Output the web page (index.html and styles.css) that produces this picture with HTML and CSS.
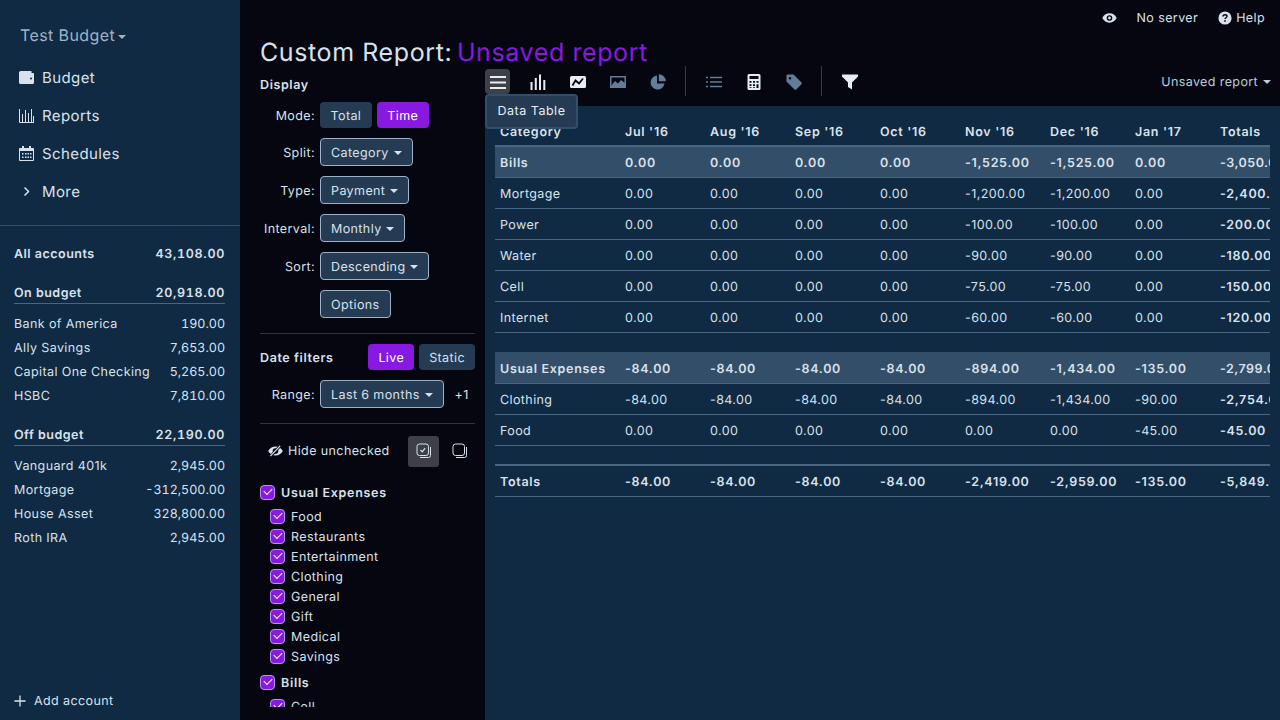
FILE: index.html
```html
<!DOCTYPE html>
<html lang="en">
<head>
    <meta charset="UTF-8">
    <title>Custom Report</title>
    <link rel="stylesheet" href="styles.css">
</head>
<body>
    <div class="app">
        <aside class="sidebar">
            <div class="budget-name">Test Budget <span class="caret"></span></div>
            <nav class="nav">
                <a class="nav-item">
                    <svg class="nav-icon" viewBox="0 0 15 15"><path d="M2.500 1h10v2H14c.5 0 1 .4 1 1v8.500c0 .8-.6 1.500-1.500 1.500h-12C.7 14 0 13.300 0 12.500v-10C0 1.700 1 1 2.500 1zM12 7.500a1 1 0 1 0 0 2 1 1 0 0 0 0-2z" fill="currentColor" fill-rule="evenodd"/></svg>
                    Budget
                </a>
                <a class="nav-item">
                    <svg class="nav-icon" viewBox="0 0 15 15"><path d="M.5 1v13.500H15M3.500 6v8M6.500 2v12M9.500 5v9M12.500 1v13M14.500 8v6" fill="none" stroke="currentColor"/></svg>
                    Reports
                </a>
                <a class="nav-item">
                    <svg class="nav-icon" viewBox="0 0 15 15"><path d="M.5 2.500h14v12H.5z" fill="none" stroke="currentColor"/><path d="M.5 2.500h14V5H.5zM3 0h2v3.500H3zM10 0h2v3.500h-2z" fill="currentColor"/><path d="M3 7h1.500v1.500H3zM6 7h1.500v1.500H6zM8.500 7H10v1.500H8.500zM11 7h1.500v1.500H11zM3 10.500h1.500V12H3zM6 10.500h1.500V12H6zM8.500 10.500H10V12H8.500zM11 10.500h1.500V12H11z" fill="currentColor"/></svg>
                    Schedules
                </a>
                <a class="nav-item">
                    <svg class="nav-icon" viewBox="0 0 15 15"><path d="M5.500 3.500 9.500 7.500 5.500 11.500" fill="none" stroke="currentColor" stroke-width="1.500"/></svg>
                    More
                </a>
            </nav>
            <div class="accounts">
                <div class="acct-total"><span>All accounts</span><span class="amt">43,108.00</span></div>
                <div class="acct-head"><span>On budget</span><span class="amt">20,918.00</span></div>
                <div class="acct"><span>Bank of America</span><span class="amt">190.00</span></div>
                <div class="acct"><span>Ally Savings</span><span class="amt">7,653.00</span></div>
                <div class="acct"><span>Capital One Checking</span><span class="amt">5,265.00</span></div>
                <div class="acct"><span>HSBC</span><span class="amt">7,810.00</span></div>
                <div class="acct-head"><span>Off budget</span><span class="amt">22,190.00</span></div>
                <div class="acct"><span>Vanguard 401k</span><span class="amt">2,945.00</span></div>
                <div class="acct"><span>Mortgage</span><span class="amt">-312,500.00</span></div>
                <div class="acct"><span>House Asset</span><span class="amt">328,800.00</span></div>
                <div class="acct"><span>Roth IRA</span><span class="amt">2,945.00</span></div>
            </div>
            <div class="add-account">
                <svg class="add-icon" viewBox="0 0 14 14"><path d="M7 .5v13M.5 7h13" fill="none" stroke="currentColor" stroke-width="1.500"/></svg>
                Add account
            </div>
        </aside>

        <main class="main">
            <div class="titlebar">
                <svg class="top-icon eye" viewBox="0 0 16 12"><path d="M8 1C4.500 1 1.600 3.200.4 6c1.200 2.800 4.100 5 7.600 5s6.400-2.200 7.600-5C14.400 3.200 11.500 1 8 1zm0 8a3 3 0 1 1 0-6 3 3 0 0 1 0 6zm0-1.500a1.500 1.500 0 1 0 0-3 1.500 1.500 0 0 0 0 3z" fill="currentColor" fill-rule="evenodd"/></svg>
                <span class="no-server">No server</span>
                <span class="help">
                    <svg class="top-icon" viewBox="0 0 16 16"><circle cx="8" cy="8" r="7.500" fill="currentColor"/><path d="M5.700 6.300c0-1.300 1-2.100 2.300-2.100s2.300.8 2.300 1.900c0 1.600-2.300 1.600-2.300 3.100" fill="none" stroke="#05060f" stroke-width="1.600"/><rect x="7.100" y="10.500" width="1.800" height="1.800" fill="#05060f"/></svg>
                    Help
                </span>
            </div>
            <h1 class="report-title">Custom Report: <span class="accent">Unsaved report</span></h1>

            <div class="report">
                <section class="panel">
                    <div class="panel-head">Display</div>
                    <div class="field field-first"><label>Mode:</label><span class="btn">Total</span><span class="btn btn-on">Time</span></div>
                    <div class="field"><label>Split:</label><span class="btn btn-sel">Category <span class="caret"></span></span></div>
                    <div class="field"><label>Type:</label><span class="btn btn-sel">Payment <span class="caret"></span></span></div>
                    <div class="field"><label>Interval:</label><span class="btn btn-sel">Monthly <span class="caret"></span></span></div>
                    <div class="field"><label>Sort:</label><span class="btn btn-sel">Descending <span class="caret"></span></span></div>
                    <div class="field"><label></label><span class="btn btn-sel">Options</span></div>
                    <hr class="rule">
                    <div class="date-head"><span class="panel-head">Date filters</span><span class="date-btns"><span class="btn btn-on">Live</span><span class="btn">Static</span></span></div>
                    <div class="field"><label>Range:</label><span class="btn btn-sel">Last 6 months <span class="caret"></span></span><span class="plus-one">+1</span></div>
                    <hr class="rule">
                    <div class="hide-row">
                        <svg class="hide-icon" viewBox="0 0 16 12"><path d="M8 1.200C4.500 1.200 1.600 3.300.2 6c1.400 2.700 4.300 4.800 7.800 4.800s6.400-2.100 7.800-4.800C14.400 3.300 11.500 1.200 8 1.200zm0 1.800a3 3 0 0 1 3 3 3 3 0 0 1-3 3 3 3 0 0 1-3-3 3 3 0 0 1 3-3z" fill="currentColor" fill-rule="evenodd"/><path d="M2.500 12 13.500 0" stroke="#05060f" stroke-width="3"/><path d="M2.500 11.500 13 .5" stroke="currentColor" stroke-width="1.300"/></svg>
                        <span class="hide-label">Hide unchecked</span>
                        <span class="sq-btn sq-on">
                            <svg viewBox="0 0 16 16"><rect x="1" y="1" width="11.500" height="11.500" rx="2.500" fill="none" stroke="currentColor"/><path d="M14.500 4v8.500a2 2 0 0 1-2 2H4" fill="none" stroke="currentColor"/><path d="m4.500 7 1.800 1.800 2.800-3.600" fill="none" stroke="currentColor" stroke-width="1.200"/></svg>
                        </span>
                        <span class="sq-btn">
                            <svg viewBox="0 0 16 16"><rect x="1" y="1" width="11.500" height="11.500" rx="2.500" fill="none" stroke="currentColor"/><path d="M14.500 4v8.500a2 2 0 0 1-2 2H4" fill="none" stroke="currentColor"/></svg>
                        </span>
                    </div>
                    <div class="cats">
                        <div class="cat-group"><span class="check"></span>Usual Expenses</div>
                        <div class="cat"><span class="check"></span>Food</div>
                        <div class="cat"><span class="check"></span>Restaurants</div>
                        <div class="cat"><span class="check"></span>Entertainment</div>
                        <div class="cat"><span class="check"></span>Clothing</div>
                        <div class="cat"><span class="check"></span>General</div>
                        <div class="cat"><span class="check"></span>Gift</div>
                        <div class="cat"><span class="check"></span>Medical</div>
                        <div class="cat"><span class="check"></span>Savings</div>
                        <div class="cat-group"><span class="check"></span>Bills</div>
                        <div class="cat"><span class="check"></span>Cell</div>
                    </div>
                </section>

                <section class="results">
                    <div class="toolbar">
                        <span class="tool tool-on">
                            <svg viewBox="0 0 16 16"><path d="M0 3h16M0 8.500h16M0 14h16" stroke="currentColor" stroke-width="2"/></svg>
                        </span>
                        <span class="tool">
                            <svg viewBox="0 0 16 16"><path d="M1.500 8v8M5.800 4v12M10 .5V16M14.300 6v10" stroke="currentColor" stroke-width="2"/></svg>
                        </span>
                        <span class="tool">
                            <svg viewBox="0 0 16 14"><rect y="1" width="16" height="12" rx="1.500" fill="currentColor"/><path d="M2.500 10.500 5.500 5.500 9 8.500 13 3.500" fill="none" stroke="#05060f" stroke-width="1.800"/></svg>
                        </span>
                        <span class="tool tool-dim">
                            <svg viewBox="0 0 16 14"><path d="M.8 1.800h14.400v10.400H.8z" fill="none" stroke="currentColor" stroke-width="1.500"/><path d="M1 11l4-5 3 2.500L11 5l4 3v4H1z" fill="currentColor"/></svg>
                        </span>
                        <span class="tool tool-dim">
                            <svg viewBox="0 0 16 16"><path d="M7 1.500a7 7 0 1 0 7.500 8H7z" fill="currentColor"/><path d="M8.800.3v7h7a7 7 0 0 0-7-7z" fill="currentColor"/></svg>
                        </span>
                        <span class="tool-sep"></span>
                        <span class="tool tool-dim">
                            <svg viewBox="0 0 16 12"><path d="M0 1.500h2M4 1.500h12M0 6h2M4 6h12M0 10.500h2M4 10.500h12" stroke="currentColor" stroke-width="1.500"/></svg>
                        </span>
                        <span class="tool">
                            <svg viewBox="0 0 14 16"><path d="M2 0h10a1.500 1.500 0 0 1 1.500 1.500v13A1.500 1.500 0 0 1 12 16H2a1.500 1.500 0 0 1-1.500-1.500v-13A1.500 1.500 0 0 1 2 0zm.5 2v3h9V2zm0 5v1.800h2V7zm3.500 0v1.800h2V7zm3.500 0v1.800h2V7zm-7 3.200V12h2v-1.800zm3.500 0V12h2v-1.800zm3.500 0V14h2v-3.800zm-7 3V14h2v-.8zm3.500 0V14h2v-.8z" fill="currentColor" fill-rule="evenodd"/></svg>
                        </span>
                        <span class="tool tool-dim">
                            <svg viewBox="0 0 16 16"><path d="M.5 1.500A1 1 0 0 1 1.500.5h6l8 8a1.200 1.200 0 0 1 0 1.700l-5.300 5.300a1.200 1.200 0 0 1-1.700 0l-8-8zM4 3a1.300 1.300 0 1 0 0 2.600A1.300 1.300 0 0 0 4 3z" fill="currentColor" fill-rule="evenodd"/></svg>
                        </span>
                        <span class="tool-sep"></span>
                        <span class="tool tool-filter">
                            <svg viewBox="0 0 16 16"><path d="M0 .5h16v2L10 8.500V15.500L6 13V8.500L0 2.500z" fill="currentColor"/></svg>
                        </span>
                        <span class="saved-menu">Unsaved report <span class="caret"></span></span>
                        <span class="tooltip">Data Table</span>
                    </div>
                    <div class="table-pane">
                        <div class="table-clip">
                        <table class="report-table">
                            <thead>
                                <tr><th>Category</th><th>Jul '16</th><th>Aug '16</th><th>Sep '16</th><th>Oct '16</th><th>Nov '16</th><th>Dec '16</th><th>Jan '17</th><th>Totals</th></tr>
                            </thead>
                            <tbody>
                                <tr class="group"><td>Bills</td><td>0.00</td><td>0.00</td><td>0.00</td><td>0.00</td><td>-1,525.00</td><td>-1,525.00</td><td>0.00</td><td>-3,050.00</td></tr>
                                <tr><td>Mortgage</td><td>0.00</td><td>0.00</td><td>0.00</td><td>0.00</td><td>-1,200.00</td><td>-1,200.00</td><td>0.00</td><td class="total">-2,400.00</td></tr>
                                <tr><td>Power</td><td>0.00</td><td>0.00</td><td>0.00</td><td>0.00</td><td>-100.00</td><td>-100.00</td><td>0.00</td><td class="total">-200.00</td></tr>
                                <tr><td>Water</td><td>0.00</td><td>0.00</td><td>0.00</td><td>0.00</td><td>-90.00</td><td>-90.00</td><td>0.00</td><td class="total">-180.00</td></tr>
                                <tr><td>Cell</td><td>0.00</td><td>0.00</td><td>0.00</td><td>0.00</td><td>-75.00</td><td>-75.00</td><td>0.00</td><td class="total">-150.00</td></tr>
                                <tr><td>Internet</td><td>0.00</td><td>0.00</td><td>0.00</td><td>0.00</td><td>-60.00</td><td>-60.00</td><td>0.00</td><td class="total">-120.00</td></tr>
                                <tr class="gap"><td colspan="9"></td></tr>
                                <tr class="group"><td>Usual Expenses</td><td>-84.00</td><td>-84.00</td><td>-84.00</td><td>-84.00</td><td>-894.00</td><td>-1,434.00</td><td>-135.00</td><td>-2,799.00</td></tr>
                                <tr><td>Clothing</td><td>-84.00</td><td>-84.00</td><td>-84.00</td><td>-84.00</td><td>-894.00</td><td>-1,434.00</td><td>-90.00</td><td class="total">-2,754.00</td></tr>
                                <tr><td>Food</td><td>0.00</td><td>0.00</td><td>0.00</td><td>0.00</td><td>0.00</td><td>0.00</td><td>-45.00</td><td class="total">-45.00</td></tr>
                                <tr class="gap"><td colspan="9"></td></tr>
                                <tr class="totals"><td>Totals</td><td>-84.00</td><td>-84.00</td><td>-84.00</td><td>-84.00</td><td>-2,419.00</td><td>-2,959.00</td><td>-135.00</td><td>-5,849.00</td></tr>
                            </tbody>
                        </table>
                        </div>
                    </div>
                </section>
            </div>
        </main>
    </div>
</body>
</html>
```

FILE: styles.css
```css
* {
    box-sizing: border-box;
}
html, body {
    margin: 0;
    height: 720px;
    overflow: hidden;
}
body {
    font-family: Inter, "Noto Sans", sans-serif;
    font-size: 12.5px;
    letter-spacing: 0.4px;
    text-rendering: geometricPrecision;
    color: #d9e2ec;
    background: #05060f;
}
.app {
    display: flex;
    height: 720px;
}
.caret {
    display: inline-block;
    width: 0;
    height: 0;
    margin-left: 1px;
    vertical-align: 2px;
    border-left: 4px solid transparent;
    border-right: 4px solid transparent;
    border-top: 4px solid currentColor;
}

/* sidebar */
.sidebar {
    width: 240px;
    flex: none;
    display: flex;
    flex-direction: column;
    background: #102a43;
}
.budget-name {
    padding: 25px 20px 0;
    height: 58px;
    font-size: 16px;
    line-height: 20px;
    color: #9fb3c8;
}
.budget-name .caret {
    margin-left: -2px;
}
.nav {
    padding-bottom: 15px;
    border-bottom: 1px solid #334e68;
}
.nav-item {
    display: flex;
    align-items: center;
    height: 38px;
    padding: 1px 0 0 19px;
    font-size: 15px;
    letter-spacing: 0.4px;
    color: #d9e2ec;
}
.nav-icon {
    width: 15px;
    height: 15px;
    margin: -1px 8px 0 0;
}
.accounts {
    flex: 1;
    padding: 15px 15px 0 14px;
}
.acct-total, .acct-head, .acct {
    display: flex;
    justify-content: space-between;
    height: 24px;
    line-height: 28px;
}
.amt {
    font-variant-numeric: tabular-nums;
    letter-spacing: 0;
}
.acct-total, .acct-head {
    font-weight: 600;
    letter-spacing: 0.5px;
}
.acct-total .amt, .acct-head .amt {
    letter-spacing: 0.7px;
}
.acct-head {
    margin-top: 15px;
    margin-bottom: 7px;
    border-bottom: 1px solid #486581;
}
.add-account {
    display: flex;
    align-items: center;
    height: 36px;
    margin-bottom: 1px;
    padding-left: 14px;
}
.add-icon {
    width: 12px;
    height: 12px;
    margin-right: 8px;
}

/* header */
.main {
    flex: 1;
    min-width: 0;
    display: flex;
    flex-direction: column;
}
.titlebar {
    display: flex;
    align-items: center;
    justify-content: flex-end;
    height: 36px;
    padding-right: 15px;
    flex: none;
}
.top-icon {
    width: 14px;
    height: 14px;
}
.eye {
    width: 15px;
    height: 12px;
}
.no-server {
    margin: 0 20px;
}
.help {
    display: flex;
    align-items: center;
    gap: 4px;
}
.report-title {
    margin: 0;
    padding: 1px 0 0 20px;
    height: 33px;
    flex: none;
    font-size: 25px;
    line-height: 32px;
    font-weight: 400;
    letter-spacing: 0.6px;
    color: #d9e2ec;
}
.accent {
    margin-left: -3px;
    color: #8719e0;
}
.report {
    flex: 1;
    display: flex;
    min-height: 0;
}

/* left panel */
.panel {
    width: 245px;
    flex: none;
    padding: 0 10px 0 20px;
    overflow: hidden;
}
.panel-head {
    padding-top: 4px;
    font-weight: 600;
    line-height: 26px;
    height: 28px;
    letter-spacing: 0.6px;
}
.field {
    display: flex;
    align-items: center;
    height: 38px;
    gap: 5px;
}
.field-first {
    height: 36px;
}
.field-first .btn {
    padding: 0 10.500px;
}
.field label {
    width: 55px;
    flex: none;
    padding-top: 3px;
    text-align: right;
}
.plus-one {
    margin-left: 6px;
    padding-top: 2px;
}
.btn {
    display: inline-block;
    padding: 0 10px;
    line-height: 29px;
    height: 26px;
    border-radius: 4px;
    background: #243b53;
    color: #d9e2ec;
    white-space: nowrap;
}
.btn-on {
    background: #8719e0;
    color: #fff;
}
.btn-sel {
    height: 28px;
    line-height: 30px;
    border: 1px solid #9fb3c8;
}
.rule {
    margin: 10px 0 0;
    border: 0;
    border-top: 1px solid #2f3440;
}
.date-head {
    display: flex;
    align-items: center;
    justify-content: space-between;
    height: 46px;
    margin-bottom: -5px;
}
.date-head .panel-head {
    padding-top: 3px;
}
.date-btns {
    display: flex;
    gap: 5px;
}
.hide-row {
    display: flex;
    align-items: center;
    height: 54px;
    padding-left: 8px;
}
.hide-icon {
    width: 15px;
    height: 12px;
    margin-right: 5px;
    flex: none;
}
.hide-label {
    flex: 1;
    white-space: nowrap;
}
.sq-btn {
    display: flex;
    flex: none;
    align-items: center;
    justify-content: center;
    width: 31px;
    height: 31px;
    border-radius: 3px;
}
.hide-row .sq-on {
    margin-right: 5px;
    background: #3e4047;
}
.sq-btn svg {
    width: 16px;
    height: 16px;
}
.cats {
    height: 229px;
    padding-top: 4px;
    overflow: hidden;
}
.check {
    flex: none;
    position: relative;
    width: 15px;
    height: 15px;
    margin: -2px 6px 0 0;
    border: 1px solid #b794f4;
    border-radius: 4px;
    background: #8719e0;
}
.check::after {
    content: "";
    position: absolute;
    left: 3px;
    top: 2px;
    width: 7px;
    height: 4px;
    border-left: 1.700px solid #fff;
    border-bottom: 1.700px solid #fff;
    transform: rotate(-45deg);
}
.cat-group {
    display: flex;
    align-items: center;
    height: 20px;
    margin: 0 0 4px;
    padding-top: 2px;
    font-weight: 600;
    letter-spacing: 0.7px;
}
.cat-group:not(:first-child) {
    margin-top: 6px;
}
.cat {
    display: flex;
    align-items: center;
    height: 20px;
    padding: 2px 0 0 10px;
}

/* toolbar + table */
.results {
    flex: 1;
    min-width: 0;
    display: flex;
    flex-direction: column;
}
.toolbar {
    position: relative;
    display: flex;
    align-items: flex-start;
    height: 37px;
    flex: none;
    color: #e6edf3;
}
.tool {
    display: flex;
    align-items: center;
    justify-content: center;
    width: 25px;
    height: 25px;
    margin-right: 15px;
    border-radius: 4px;
}
.tool svg {
    width: 16px;
    height: 16px;
}
.tool-on {
    background: #3e4047;
}
.tool-dim {
    color: #627d98;
}
.tool-sep {
    width: 1px;
    height: 30px;
    margin: -3px 15px 0 0;
    background: #2f3b4a;
}
.saved-menu {
    margin-left: auto;
    padding: 6px 9px 0 0;
    line-height: 16px;
    color: #bcccdc;
}
.tooltip {
    position: absolute;
    left: 0;
    top: 25px;
    z-index: 2;
    width: 93px;
    height: 35px;
    line-height: 32px;
    text-align: center;
    letter-spacing: 0.5px;
    border: 2px solid #334e68;
    border-radius: 4px;
    background: #243b53;
}
.table-pane {
    flex: 1;
    padding: 10px 10px 0;
    background: #102a43;
    overflow: hidden;
}
.table-clip {
    overflow: hidden;
}
.report-table {
    border-collapse: collapse;
    table-layout: fixed;
    width: 805px;
}
.report-table th, .report-table td {
    width: 85px;
    padding: 4px 0 0 5px;
    height: 31px;
    text-align: left;
    white-space: nowrap;
    overflow: hidden;
    border-bottom: 1px solid #486581;
}
.report-table th {
    height: 30px;
    font-weight: 600;
    letter-spacing: 0.7px;
    color: #d9e2ec;
    border-bottom-width: 2px;
}
.report-table th:first-child {
    width: 125px;
}
.group td {
    font-weight: 600;
    letter-spacing: 0.7px;
    background: #334e68;
}
.group td:last-child {
    letter-spacing: 0.5px;
}
.gap td {
    height: 20px;
    border-bottom: 0;
}
.total {
    font-weight: 600;
    letter-spacing: 0.7px;
}
.totals td {
    font-weight: 600;
    letter-spacing: 0.7px;
    border-top: 2px solid #486581;
}
```
